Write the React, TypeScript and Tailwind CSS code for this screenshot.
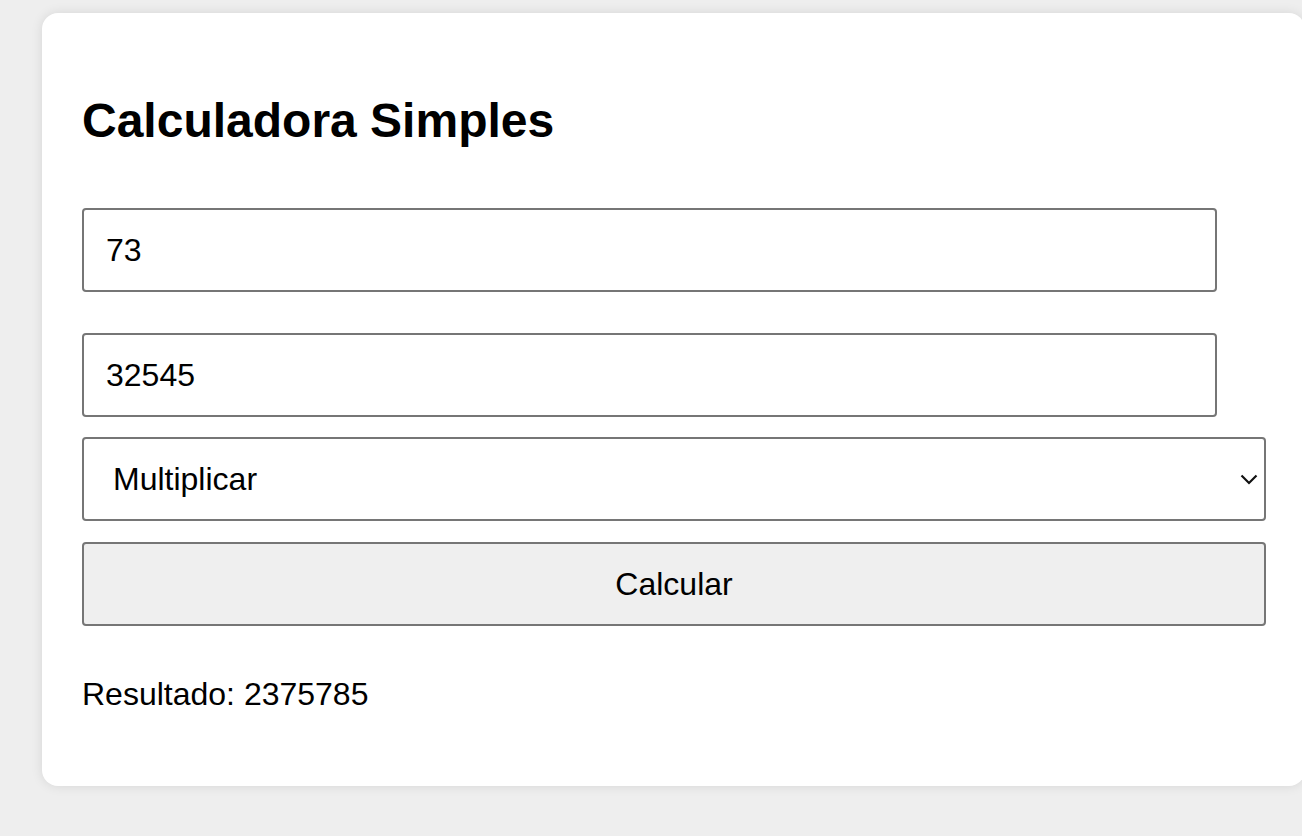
import React, { useState } from "react";

export default function App() {
  const [a, setA] = useState("73");
  const [b, setB] = useState("32545");
  const [op, setOp] = useState("mul");

  return (
    <div
      className="w-full h-screen overflow-hidden bg-[#eeeeee] text-black"
      style={{ fontFamily: '"Liberation Sans", Arial, Helvetica, sans-serif' }}
    >
      <div className="ml-[42px] mt-[13px] w-[1263px] h-[773px] bg-white rounded-[16px] shadow-[0_0_12px_rgba(0,0,0,0.1)] px-[40px] pt-[40px] flex flex-col">
        <h1 className="mt-[40px] text-[48px] leading-[55px] font-bold">Calculadora Simples</h1>
        <input
          value={a}
          onChange={(e) => setA(e.target.value)}
          className="mt-[60px] w-[1135px] h-[84px] border-2 border-[#767676] rounded-[4px] px-[22px] text-[32px] outline-none bg-white"
        />
        <input
          value={b}
          onChange={(e) => setB(e.target.value)}
          className="mt-[41px] w-[1135px] h-[84px] border-2 border-[#767676] rounded-[4px] px-[22px] text-[32px] outline-none bg-white"
        />
        <div className="relative mt-[20px] w-[1184px] h-[84px]">
          <select
            value={op}
            onChange={(e) => setOp(e.target.value)}
            className="appearance-none w-full h-full border-2 border-[#767676] rounded-[4px] pl-[29px] pr-[50px] text-[32px] outline-none bg-white"
          >
            <option value="add">Somar</option>
            <option value="sub">Subtrair</option>
            <option value="mul">Multiplicar</option>
            <option value="div">Dividir</option>
          </select>
          <svg
            className="absolute right-[8px] top-[37px] pointer-events-none"
            width="18"
            height="11"
            viewBox="0 0 18 11"
            fill="none"
          >
            <path d="M1.5 1.5 L9 9 L16.5 1.5" stroke="#111" strokeWidth="2.2" />
          </svg>
        </div>
        <button className="mt-[21px] w-[1184px] h-[84px] border-2 border-[#767676] rounded-[4px] bg-[#efefef] text-[32px] text-black">
          Calcular
        </button>
        <p className="mt-[50px] text-[32px] leading-[37px]">Resultado: 2375785</p>
      </div>
    </div>
  );
}
